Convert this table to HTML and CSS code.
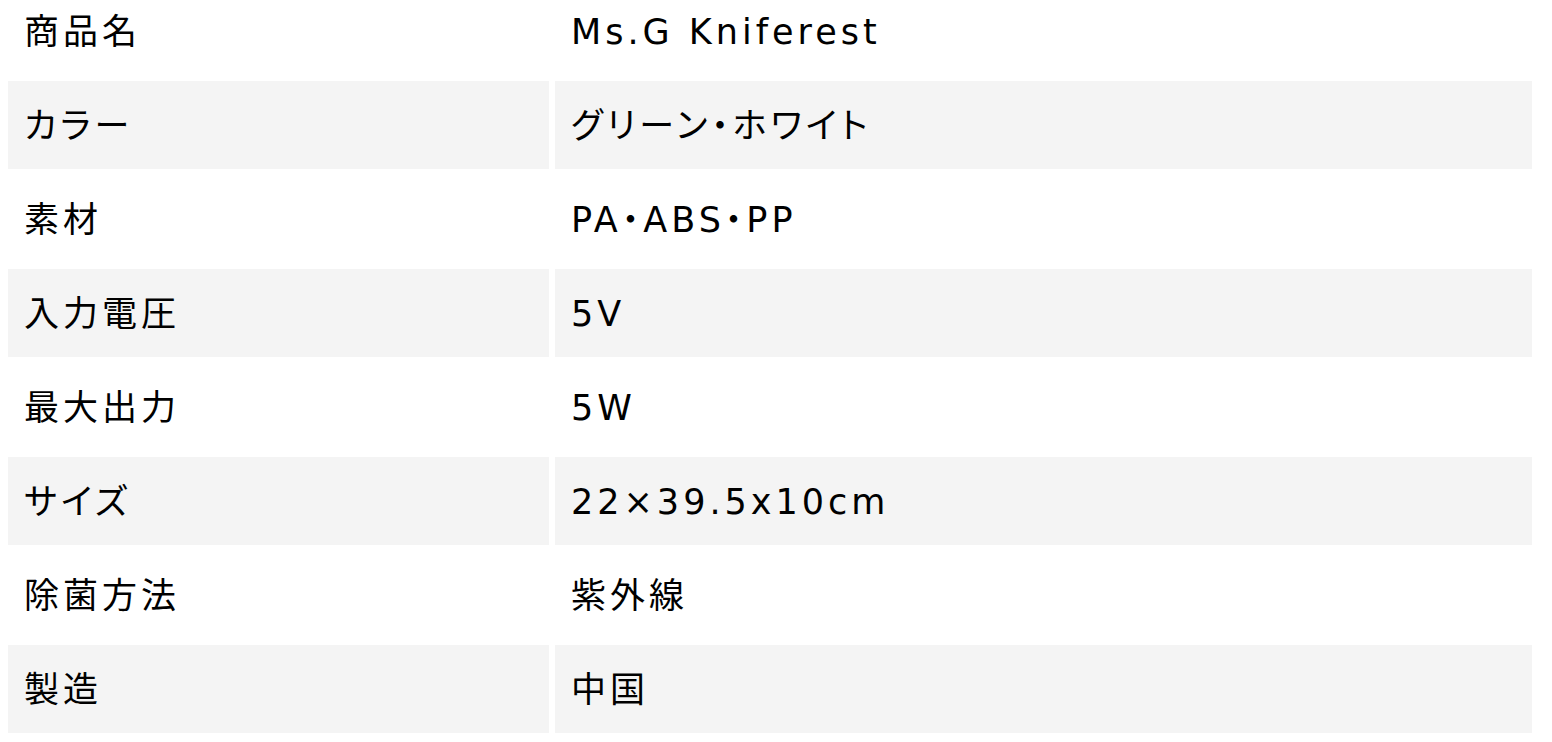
FILE: index.html
```html
<!DOCTYPE html>
<html lang="ja">
<head>
<meta charset="utf-8">
<link rel="stylesheet" href="styles.css">
</head>
<body>
<table class="spec">
  <tbody>
    <tr><th>商品名</th><td>Ms.G Kniferest</td></tr>
    <tr><th>カラー</th><td>グリーン・ホワイト</td></tr>
    <tr><th>素材</th><td>PA・ABS・PP</td></tr>
    <tr><th>入力電圧</th><td>5V</td></tr>
    <tr><th>最大出力</th><td>5W</td></tr>
    <tr><th>サイズ</th><td>22×39.5x10cm</td></tr>
    <tr><th>除菌方法</th><td>紫外線</td></tr>
    <tr><th>製造</th><td>中国</td></tr>
  </tbody>
</table>
</body>
</html>
```

FILE: styles.css
```css
html, body {
  margin: 0;
  background: #ffffff;
  overflow: hidden;
}
body {
  padding: 0 20px 0 8px;
  font-family: "DejaVu Sans", "Noto Sans CJK JP", sans-serif;
  color: #000;
}
.spec {
  width: 1536px;
  margin-top: -19px;
  margin-left: -6px;
  border-collapse: separate;
  border-spacing: 6px 6px;
  table-layout: fixed;
}
.spec th,
.spec td {
  height: 88px;
  padding: 2px 16px 0;
  box-sizing: border-box;
  text-align: left;
  font-weight: normal;
  font-size: 35px;
  letter-spacing: 4px;
  line-height: 1;
  vertical-align: middle;
  font-feature-settings: "palt";
}
.spec th { width: 541px; }
.spec tr:nth-child(even) th,
.spec tr:nth-child(even) td {
  background: #f4f4f4;
}
```
